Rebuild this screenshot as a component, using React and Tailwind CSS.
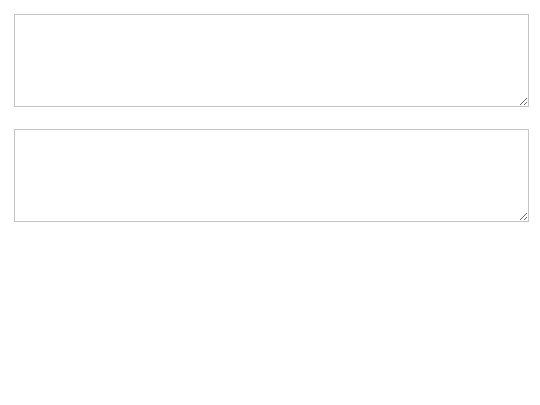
export default function App() {
  return (
    <div className="flex flex-col gap-[22px] p-[14px] bg-white min-h-[405px]">
      <textarea className="block w-[515px] h-[93px] border border-[#c4c4c4] bg-white resize" />
      <textarea className="block w-[515px] h-[93px] border border-[#c4c4c4] bg-white resize" />
    </div>
  );
}
